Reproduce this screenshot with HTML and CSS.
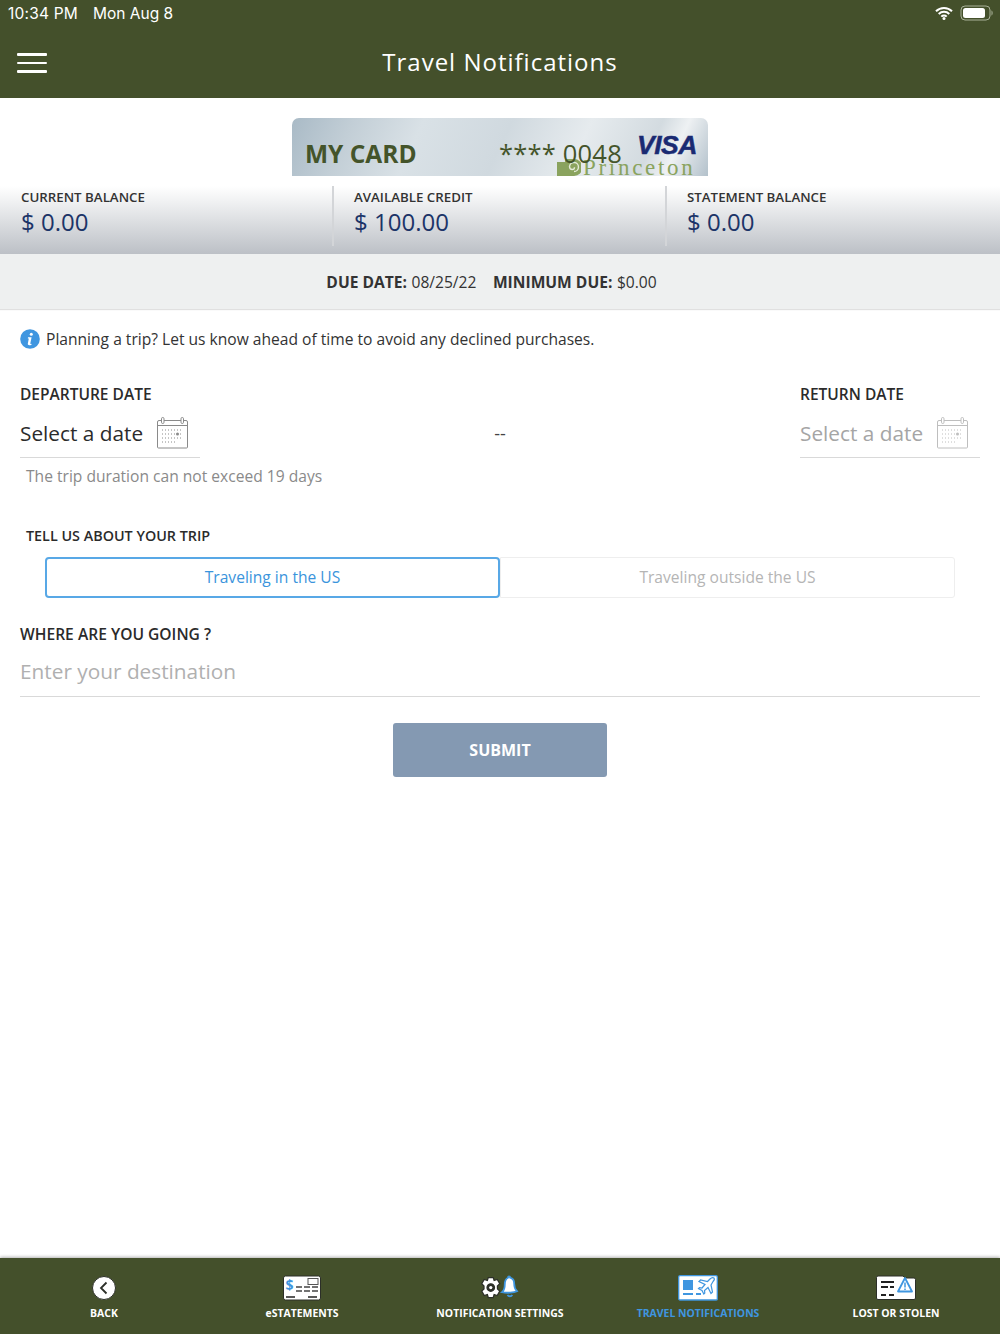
FILE: index.html
```html
<!DOCTYPE html>
<html lang="en">
<head>
<meta charset="utf-8">
<title>Travel Notifications</title>
<link rel="stylesheet" href="styles.css">
</head>
<body>
<div class="app">
  <header class="top">
    <div class="status">
      <span class="clock">10:34 PM</span><span class="day">Mon Aug 8</span>
      <span class="status-right">
        <svg class="wifi" width="18" height="14" viewBox="0 0 18 14"><path d="M1 5.2a11.5 11.5 0 0 1 16 0M3.7 8a7.6 7.6 0 0 1 10.6 0M6.3 10.6a3.8 3.8 0 0 1 5.4 0" fill="none" stroke="#fff" stroke-width="2"/><circle cx="9" cy="12.4" r="1.5" fill="#fff"/></svg>
        <svg width="34" height="16" viewBox="0 0 34 16"><rect x="1" y="1" width="29" height="14" rx="4" fill="none" stroke="#a9b199"/><rect x="3" y="3" width="22" height="10" rx="2.5" fill="#fff"/><path d="M31.500 5.500c1.500.4 1.500 4.600 0 5z" fill="#a9b199"/></svg>
      </span>
    </div>
    <div class="titlebar">
      <div class="burger"><i></i><i></i><i></i></div>
      <h1>Travel Notifications</h1>
    </div>
  </header>

  <div class="card-wrap">
    <div class="card">
      <span class="card-name">MY CARD</span>
      <span class="brand">
        <svg width="24" height="17" viewBox="0 0 24 17"><path d="M0 3h8V0h9a8.500 8.500 0 0 1 0 17H0z" fill="#8aa35e"/><path d="M17 12.500a4.500 4.500 0 1 0-4.500-5c0 1.900 1.200 3 2.800 3a2.200 2.200 0 0 0 2.200-2.200" fill="none" stroke="#e4ead8" stroke-width="1.400"/></svg>
        <span class="brand-name">Princeton</span>
      </span>
      <span class="card-num">**** 0048</span>
      <span class="visa">VISA</span>
    </div>
  </div>

  <section class="balances">
    <div class="bal"><div class="bal-label">CURRENT BALANCE</div><div class="bal-value">$ 0.00</div></div>
    <div class="bal"><div class="bal-label">AVAILABLE CREDIT</div><div class="bal-value">$ 100.00</div></div>
    <div class="bal"><div class="bal-label">STATEMENT BALANCE</div><div class="bal-value">$ 0.00</div></div>
  </section>

  <div class="due"><b>DUE DATE:</b> 08/25/22 <b class="min">MINIMUM DUE:</b> $0.00</div>

  <main class="content">
    <p class="notice">
      <svg width="20" height="20" viewBox="0 0 20 20"><circle cx="10" cy="10" r="9.800" fill="#3f96e0"/><circle cx="11.300" cy="5.300" r="1.500" fill="#fff"/><path d="M8 8.300h3.600l-1.300 6.200c0 .5.500.5 1.400.2l-.2 1c-2 .9-4 .6-3.700-.9l1-5.200-1 0z" fill="#fff"/></svg>
      Planning a trip? Let us know ahead of time to avoid any declined purchases.
    </p>

    <div class="dates">
      <div class="date-col">
        <div class="label">DEPARTURE DATE</div>
        <div class="date-field">
          <span>Select a date</span>
          <svg class="cal" width="33" height="33" viewBox="0 0 33 33"><use href="#calendar"/></svg>
        </div>
      </div>
      <div class="dash">--</div>
      <div class="date-col off">
        <div class="label">RETURN DATE</div>
        <div class="date-field">
          <span>Select a date</span>
          <svg class="cal" width="33" height="33" viewBox="0 0 33 33"><use href="#calendar"/></svg>
        </div>
      </div>
    </div>
    <p class="hint">The trip duration can not exceed 19 days</p>

    <div class="label about">TELL US ABOUT YOUR TRIP</div>
    <div class="tabs">
      <div class="tab on">Traveling in the US</div>
      <div class="tab">Traveling outside the US</div>
    </div>

    <div class="label where">WHERE ARE YOU GOING ?</div>
    <div class="dest">Enter your destination</div>

    <div class="submit-row"><button class="submit">SUBMIT</button></div>
  </main>

  <nav class="tabbar">
    <div class="nav">
      <svg width="26" height="26" viewBox="0 0 26 26"><circle cx="13" cy="13" r="11.500" fill="#fff" stroke="#2c2f28"/><path d="M15.500 7.500 10 13l5.500 5.500" fill="none" stroke="#2c2f28" stroke-width="1.800"/></svg>
      <span>BACK</span>
    </div>
    <div class="nav">
      <svg width="38" height="26" viewBox="0 0 38 26"><rect x=".5" y="1" width="37" height="24" rx="2" fill="#fff" stroke="#2c2f28"/><rect x="25" y="3.500" width="10" height="6" fill="#fff" stroke="#555"/><text x="2.500" y="15" class="dollar">$</text><path d="M13 12h6m2 0h6m2 0h6M13 16h6m2 0h6m2 0h6" stroke="#444" stroke-width="1.500"/><path d="M3 22h9M25 22h9" stroke="#222" stroke-width="1.500"/></svg>
      <span>eSTATEMENTS</span>
    </div>
    <div class="nav">
      <svg width="40" height="26" viewBox="0 0 40 26"><g fill="#fff" stroke="#2c2f28" transform="translate(-.5 -2.500) scale(1.250)"><path d="M7 4h4l.7 2.400 2.500-.8 2 3.400-1.900 1.800.1 2.400 1.800 1.700-2 3.500-2.500-.8L11 20H7l-.7-2.400-2.500.8-2-3.500 1.800-1.700V10.800L1.800 9l2-3.400 2.500.8z" stroke-width="1"/><circle cx="9" cy="12" r="3" fill="#2c2f28"/><circle cx="9" cy="12" r="1.300" stroke="none"/></g><path d="M29 1.500c.8 0 1.200.6 1.200 1.200 3 .8 4 3.300 4 6 0 4 1.300 6 2.800 7.500-3 1.500-10 2-15 1 1.800-1.500 2.800-4 2.800-8 0-3 1.200-5.500 3.200-6.500 0-.6.400-1.200 1-1.200z" fill="#fff" stroke="#3f96e0" stroke-width="1.800"/><path d="M27.500 19.800a2.700 2.700 0 0 0 4.800 0" fill="none" stroke="#3f96e0" stroke-width="1.800"/></svg>
      <span>NOTIFICATION SETTINGS</span>
    </div>
    <div class="nav active">
      <svg width="40" height="26" viewBox="0 0 40 26"><path d="M2 .7h36a1.300 1.300 0 0 1 1.300 1.300v22a1 1 0 0 1-1 1H2a1.300 1.300 0 0 1-1.300-1.300V2A1.300 1.300 0 0 1 2 .7z" fill="#fff" stroke="#3f96e0" stroke-width="1.300"/><rect x="5" y="5" width="10" height="10" fill="#3f96e0"/><path d="M5 19h10M18 19h5" stroke="#3f96e0" stroke-width="2"/><path d="M36 3c-1.500-1-3 0-4 1l-2.500 2.500-7-1.500-1.500 1.500 6 3-3 3.500-2.500-.3-1 1 3.500 1.800 1.800 3.500 1-1-.3-2.500 3.500-3 3 6 1.500-1.500-1.500-7L35 6.500c1-1 1.800-2.500 1-3.500z" fill="#fff" stroke="#3f96e0" stroke-width="1.200"/></svg>
      <span>TRAVEL NOTIFICATIONS</span>
    </div>
    <div class="nav">
      <svg width="40" height="26" viewBox="0 0 40 26"><path d="M2 1h25l2 2h9a1.500 1.500 0 0 1 1.500 1.500V23a1.500 1.500 0 0 1-1.500 1.500H2A1.500 1.500 0 0 1 .5 23V2.500A1.500 1.500 0 0 1 2 1z" fill="#fff" stroke="#2c2f28"/><path d="M5 7h13M5 12h7m2 0h4M5 20h5m3 0h5" stroke="#222" stroke-width="2"/><path d="M29 3 22 16.500h14z" fill="#fff" stroke="#3f96e0" stroke-width="1.800" stroke-linejoin="round"/><path d="M29 7.500v5M29 13.500v1.500" stroke="#3f96e0" stroke-width="1.500"/></svg>
      <span>LOST OR STOLEN</span>
    </div>
  </nav>
</div>

<svg class="defs" width="0" height="0">
  <symbol id="calendar" viewBox="0 0 33 33">
    <path d="M3 4.500h27a1.500 1.500 0 0 1 1.500 1.500v25a1 1 0 0 1-1 1H2.500a1 1 0 0 1-1-1V6A1.500 1.500 0 0 1 3 4.500zM1.500 9.500h30" fill="#fff" stroke="#8a8a8a"/>
    <rect x="5.500" y="1.500" width="2.500" height="6" rx="1.200" fill="#fff" stroke="#8a8a8a"/>
    <rect x="25" y="1.500" width="2.500" height="6" rx="1.200" fill="#fff" stroke="#8a8a8a"/>
    <path d="M6 14h21M6 18h21M6 22h21M6 26h13" stroke="#8a8a8a" stroke-width="1" stroke-dasharray="1 2"/>
    <circle cx="21.500" cy="18" r="1.500" fill="#8a8a8a"/>
  </symbol>
</svg>
</body>
</html>
```
FILE: styles.css
```css
* { box-sizing: border-box; }
html, body { margin: 0; padding: 0; }
body { background: #fff; font-family: "Open Sans", "Noto Sans", sans-serif; color: #2b2b2b; }
.app { width: 1000px; height: 1334px; display: flex; flex-direction: column; overflow: hidden; }

.top { background: #44502b; height: 98px; color: #fff; flex: none; }
.status { height: 26px; padding: 0 8px; display: flex; align-items: center; font-family: "Inter", "Liberation Sans", sans-serif; font-size: 15.500px; }
.clock { letter-spacing: .2px; }
.day { margin-left: 15px; }
.status-right { margin-left: auto; margin-right: -2px; display: flex; align-items: center; gap: 7px; }
.wifi { margin-top: -1px; }
.titlebar { height: 72px; position: relative; display: flex; align-items: center; justify-content: center; padding-bottom: 2px; }
.titlebar h1 { margin: 0; font-size: 24px; font-weight: 400; letter-spacing: 1px; }
.burger { position: absolute; left: 17px; top: 27px; width: 30px; display: flex; flex-direction: column; gap: 6px; }
.burger i { display: block; height: 2.500px; background: #fff; border-radius: 1px; }

.card-wrap { height: 88px; padding-top: 20px; display: flex; justify-content: center; flex: none; }
.card { width: 416px; height: 58px; border-radius: 7px 7px 0 0; position: relative; overflow: hidden;
  background: linear-gradient(115deg, #a9bac6 0%, #c2ced6 14%, #d9e1e6 30%, #d0d9df 50%, #e6ebee 68%, #d3dbe0 84%, #eef1f3 90%, #b3c1cb 100%); }
.card-name { position: absolute; left: 13px; top: 19px; font-size: 24.500px; font-weight: 700; color: #44542a; line-height: 34px; }
.card-num { position: absolute; left: 207px; top: 18px; font-size: 25.500px; color: #44542a; line-height: 34px; letter-spacing: .2px; }
.visa { position: absolute; left: 345px; top: 9px; font-family: "Liberation Sans", sans-serif; font-size: 26.500px; line-height: 36px; font-weight: 700; font-style: italic; color: #1a2a72; letter-spacing: -.5px; -webkit-text-stroke: .5px #1a2a72; }
.brand { position: absolute; left: 265px; top: 41px; display: flex; align-items: flex-start; height: 17px; }
.brand-name { font-family: "Liberation Serif", serif; font-size: 23px; line-height: 17px; letter-spacing: 2.700px; margin-left: 2px; color: #8aa35e; white-space: nowrap; }

.balances { height: 68px; flex: none; display: grid; grid-template-columns: 332px 333px 335px; background: linear-gradient(#fff 0%, #f2f3f4 20%, #bcc0c6 100%); }
.bal { padding: 2px 0 0 21px; position: relative; }
.bal + .bal { border-left: 2px solid #d3d5d8; margin-bottom: 8px; padding-left: 20px; }
.bal-label { font-size: 13.300px; font-weight: 600; line-height: 18px; color: #333; }
.bal-value { font-size: 24px; line-height: 32px; color: #1c3468; }

.due { height: 55px; flex: none; background: #eef0f0; box-shadow: 0 1px 1px rgba(0,0,0,.12); display: flex; align-items: center; justify-content: center; gap: 4.500px; font-size: 15.600px; color: #333; padding-right: 17px; }
.due b { font-weight: 700; }
.due .min { margin-left: 12px; }

.content { flex: 1; padding: 0 20px; display: flex; flex-direction: column; }
.notice { margin: 19px 0 0; display: flex; align-items: center; gap: 6px; font-size: 15.600px; line-height: 22px; color: #333; height: 22px; }
.label { font-size: 15.500px; font-weight: 600; line-height: 22px; color: #2b2b2b; }
.dates { display: flex; justify-content: space-between; margin-top: 33px; }
.date-col { width: 180px; }
.date-field { height: 46px; margin-top: 7px; padding-bottom: 4px; border-bottom: 1px solid #d9d9d9; display: flex; align-items: center; justify-content: space-between; padding-right: 11px; font-size: 20.800px; color: #2b2b2b; }
.date-field .cal { margin-top: -1px; }
.date-col.off .date-field { color: #a5a5a5; }
.date-col.off .cal { opacity: .55; }
.dash { font-size: 18px; align-self: center; margin-top: 25px; color: #444; }
.hint { margin: 7px 0 0 6px; font-size: 15.600px; line-height: 22px; color: #8a8a8a; }

.about { margin: 38px 0 0 6px; font-size: 14.350px; font-weight: 600; line-height: 22px; }
.tabs { display: grid; grid-template-columns: 1fr 1fr; margin: 10px 25px 0; height: 41px; }
.tab { display: flex; align-items: center; justify-content: center; padding-bottom: 2px; font-size: 15.600px; color: #b5b5b5; border: 1px solid #eeeeee; border-radius: 0 3px 3px 0; }
.tab.on { color: #3a94dc; border: 2px solid #58a8e6; border-radius: 4px; }

.where { margin-top: 25px; font-size: 15.600px; }
.dest { height: 48px; margin-top: 4px; border-bottom: 1px solid #d9d9d9; font-size: 20.800px; line-height: 44px; color: #b0b0b0; }
.submit-row { display: flex; justify-content: center; margin-top: 26px; }
.submit { width: 214px; height: 54px; border: 0; border-radius: 3px; background: #8499b2; color: #fff; font: 700 16px "Open Sans", sans-serif; }

.tabbar { height: 76px; flex: none; background: #44502b; box-shadow: 0 -1px 3px rgba(0,0,0,.3); display: grid; grid-template-columns: repeat(5, 1fr); padding: 0 5px; }
.nav { display: flex; flex-direction: column; align-items: center; padding-top: 17px; color: #fff; }
.nav span { font-size: 10.450px; font-weight: 700; line-height: 14px; margin-top: 5px; white-space: nowrap; }
.nav.active span { color: #3f96e0; }
.dollar { font: 700 14px "Open Sans", sans-serif; fill: #3f96e0; }
.defs { position: absolute; }
```
